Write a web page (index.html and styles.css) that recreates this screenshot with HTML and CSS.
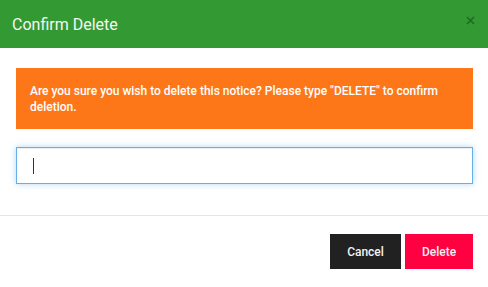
FILE: index.html
```html
<!DOCTYPE html>
<html>
<head>
<meta charset="utf-8">
<link rel="stylesheet" href="styles.css">
</head>
<body>
<div class="modal">
  <div class="modal-header">
    <h4 class="modal-title">Confirm Delete</h4>
    <button class="close" type="button" aria-label="Close">
      <svg width="9" height="9" viewBox="0 0 9 9"><path d="M1 1L8 8M8 1L1 8" stroke="currentColor" stroke-width="1.6"/></svg>
    </button>
  </div>
  <div class="modal-body">
    <div class="alert">Are you sure you wish to delete this notice? Please type "DELETE" to confirm deletion.</div>
    <div class="input"><span class="caret"></span></div>
  </div>
  <div class="modal-footer">
    <button class="btn btn-cancel" type="button">Cancel</button>
    <button class="btn btn-delete" type="button">Delete</button>
  </div>
</div>
</body>
</html>
```

FILE: styles.css
```css
* { box-sizing: border-box; }
html, body { margin: 0; padding: 0; background: #fff; }
body { font-family: Roboto, "Liberation Sans", sans-serif; }
.modal { width: 488px; height: 287px; background: #fff; }
.modal-header {
  height: 48px;
  background: #339933;
  display: flex;
  align-items: center;
  justify-content: space-between;
  padding: 0 12px;
}
.modal-title {
  margin: 0;
  font-size: 16px;
  font-weight: 400;
  color: #f4f8f4;
}
.close {
  border: 0;
  background: none;
  padding: 0;
  color: #1f5f1f;
  opacity: 0.8;
  display: flex;
  margin-top: -8px;
  margin-right: 1px;
}
.modal-body {
  padding: 20px 15px 31px 16px;
  border-bottom: 1px solid #e5e5e5;
}
.alert {
  background: #fd7719;
  color: #fff;
  font-size: 12px;
  font-weight: 500;
  line-height: 16px;
  padding: 15px 14px 14px 14px;
}
.input {
  margin-top: 18px;
  height: 37px;
  border: 1px solid #66afe9;
  box-shadow: inset 0 1px 1px rgba(0,0,0,.075), 0 0 6px rgba(102,175,233,.5);
  display: flex;
  align-items: center;
  padding-left: 16px;
}
.caret { width: 1px; height: 16px; background: #333; }
.modal-footer {
  display: flex;
  justify-content: flex-end;
  gap: 4px;
  padding: 18px 15px 0 0;
}
.btn {
  border: 0;
  height: 35px;
  font-family: Roboto, "Liberation Sans", sans-serif;
  font-size: 12px;
  font-weight: 500;
  color: #f2f2f2;
}
.btn-cancel { background: #212121; width: 71px; }
.btn-delete { background: #ff0040; width: 68px; }
```
